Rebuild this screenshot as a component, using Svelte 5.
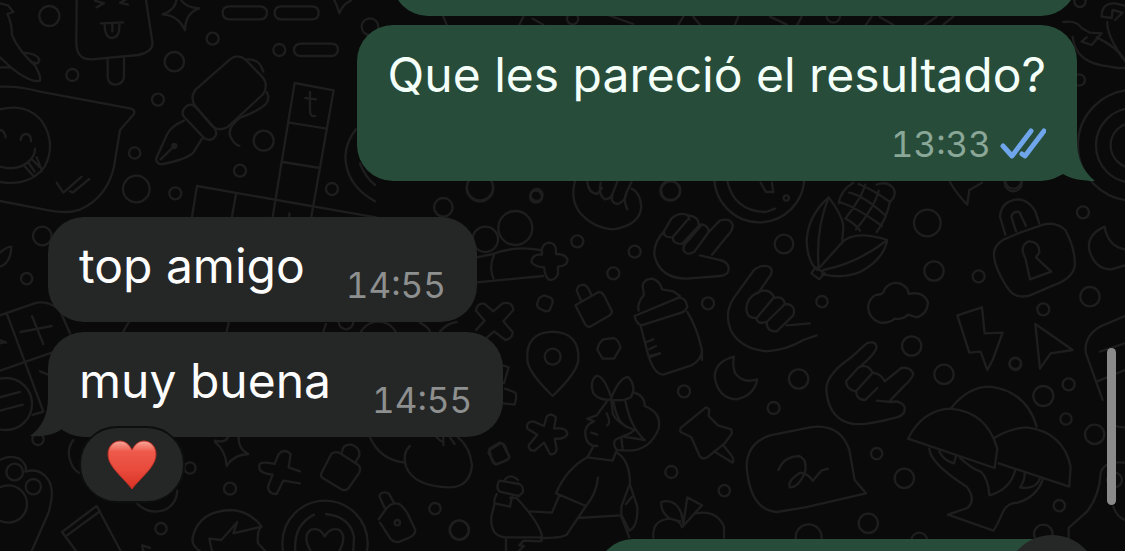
<script>
  // Each tile is a patch of the wallpaper drawn on its own 3x grid.
  const tiles = [
    {
      x: 0,
      y: 0,
      circles: [
        [148, 48, 30], [217, 225, 18], [638, 116, 18], [523, 185, 29],
        [474, 299, 18], [404, 459, 17], [409, 567, 40], [526, 580, 18],
        [720, 512, 18], [791, 422, 30], [838, 150, 18], [996, 567, 18],
        [1110, 80, 25], [523, 438, 6],
      ],
      paths: [
        "M230 0 L229 130 Q230 180 275 178 L415 165 Q462 155 457 125 L438 0",
        "M285 2 L312 10 L290 22 M382 -4 L360 8 L384 14 M302 70 L370 67 M314 72 Q314 114 337 114 Q361 112 358 70 M337 72 V94",
        "M323 180 V230 Q325 254 347 254 Q371 252 372 230 V174",
        "M530 -5 Q528 30 488 43 Q535 46 555 91 Q556 38 598 25 Q556 24 540 -5",
        "M688 19 H780 Q800 20 801 38 Q800 58 780 58 H688 Q668 57 668 38 Q668 20 688 19",
        "M844 19 H936 Q956 20 956 38 Q956 58 936 58 H844 Q824 57 824 38 Q824 20 844 19",
        "M902 131 H994 Q1014 132 1014 149 Q1012 168 994 168 H902 Q882 166 882 149 Q884 132 902 131",
        "M1000 -4 Q1012 15 1018 40 Q1030 10 1053 2",
        "M0 10 L24 16 L40 36 L22 42 Q36 70 36 105 Q54 150 105 196 Q124 230 120 242 Q90 250 30 200 L0 172 M0 202 H30 M68 158 Q110 160 118 178 L114 190 L92 186",
        "M0 260 Q60 258 120 275 L390 325 Q406 328 402 342 L360 390 L342 500 Q322 590 242 628 Q204 642 150 632 L0 603",
        "M0 328 Q80 308 126 364 Q170 430 134 500 Q90 560 0 546",
        "M0 390 Q14 392 17 412 M62 420 Q64 401 80 402 Q94 405 93 424 M0 500 Q50 514 85 486 Q105 468 105 446 M70 494 L102 530 L126 512 L110 472 M84 486 L104 515 M98 480 L118 500",
        "M170 548 L190 578 L245 530 M210 574 L218 578 L268 537",
        "M586 270 L690 178 Q712 160 736 178 L788 232 Q806 254 790 282 L682 382 Q656 396 634 376 L584 316 Q570 292 586 270",
        "M554 324 Q568 306 586 320 L642 382 Q656 402 642 414 Q626 426 610 412 L550 348 Q544 336 554 324",
        "M552 362 Q510 380 500 406 L468 476 Q470 496 490 492 Q560 478 580 458 L606 416 M482 478 L523 438",
        "M742 178 Q780 176 790 215 M800 276 Q812 296 796 314 Q770 336 722 352 Q676 386 694 415 Q704 434 718 438",
        "M884 249 L1001 271 L934 651 M884 249 L818 651 M868 368 L980 386 M848 486 L960 504 M916 294 L948 298 M930 276 V330 Q930 352 946 348",
        "M576 651 L591 558 L1128 652 M708 582 L696 650 M868 640 V648",
        "M1068 388 Q1020 450 1045 518 Q1064 570 1125 604 M1080 490 Q1095 530 1125 555",
      ],
    },
    {
      x: 350,
      y: 0,
      circles: [[390, 562, 39], [560, 585, 18], [961, 572, 30], [668, 56, 17]],
      paths: ["M280 50 L290 74 M520 50 L508 74 M548 56 L580 74 M760 40 L850 72 M1000 50 L985 74 M1030 50 L1050 74 M1165 50 L1155 74"],
    },
    {
      x: 740,
      y: 0,
      circles: [[1018, 240, 17], [1020, 4, 17], [1180, 436, 166], [1180, 436, 112], [1180, 436, 68], [280, 48, 20], [820, 548, 26]],
      paths: [
        "M1085 50 Q1085 8 1125 10 L1160 18 M1085 50 L1115 54 L1118 30 L1148 38 L1125 60 M1102 66 Q1100 110 1160 190",
        "M970 66 Q1010 60 1025 84 L1050 98 L1085 100 L1055 135 L1025 125 L1040 112 M1070 112 Q1130 140 1155 180 M998 110 Q1005 190 1110 200 Q1135 206 1155 204",
        "M90 50 L140 74 M185 50 L172 74 M395 50 L378 74 M418 50 L460 74 M590 50 L555 74 M640 50 L610 74",
      ],
    },
    {
      x: 0,
      y: 200,
      circles: [
        [127, 108, 28], [80, 236, 17], [114, 718, 17], [570, 804, 17],
        [690, 866, 18], [483, 986, 17], [44, 816, 25], [100, 860, 23],
        [18, 612, 78], [25, 912, 56],
      ],
      paths: [
        "M0 158 Q20 140 34 140 Q32 190 0 200",
        "M0 346 L110 308 Q150 302 180 332 L210 400 M20 340 L130 634 M0 512 L155 458 M0 420 L18 428 M62 396 L155 378 M96 348 L130 432 M0 430 L16 426 M120 514 L145 524 M0 592 L60 576 M0 632 L68 614 M98 645 L128 636",
        "M0 780 Q28 764 58 776 Q84 796 76 815 Q120 802 145 840 Q166 870 145 940 L95 1053",
        "M220 720 Q194 752 218 800 Q232 820 244 820 M412 912 Q450 946 495 930 Q530 912 532 872",
        "M186 996 L290 918 L362 1053 M186 996 L228 1053 M196 1010 L300 934",
        "M645 722 Q676 730 684 712 M716 712 Q714 746 745 762 Q700 764 680 798 Q678 754 645 726",
        "M778 800 Q776 786 800 788 L824 792 L836 762 Q854 744 872 762 L866 802 L900 814 M778 800 Q776 820 818 824 L804 860 Q804 882 830 882 L850 842 L900 850",
        "M600 1053 Q570 1035 580 1005 Q600 934 690 930 Q750 932 785 980 L700 1000 L712 966 L664 1020 L628 1016 L636 1053 M785 980 Q770 990 774 1030 L796 1053",
        "M370 395 Q380 376 386 368 M686 368 L680 395 M430 1053 L426 1036 L450 1044",
      ],
    },
    {
      x: 270,
      y: 200,
      circles: [
        [520, 22, 28], [495, 926, 17], [568, 990, 28], [165, 1030, 128],
        [382, 968, 8], [228, 366, 22], [325, 425, 60],
      ],
      paths: [
        "M76 1053 Q70 975 132 944 M168 942 Q240 950 252 1010 L250 1053 M122 1053 Q96 1008 122 990 Q150 980 164 1010 Q180 980 208 990 Q232 1010 208 1053",
        "M154 820 L184 762 Q196 752 210 760 L264 794 Q274 804 268 818 L236 864 Q228 874 214 868 L158 834 Q150 828 154 820 M216 756 Q218 732 244 734 Q272 742 268 768 L256 788",
        "M326 958 L346 930 Q364 904 388 912 Q408 926 420 956 L436 990 Q436 1004 420 1012 L386 1026 Q366 1028 356 1008 L330 968 M344 924 L328 888 Q334 872 356 880 L374 912",
        "M300 712 Q330 780 404 788 M420 738 Q396 760 408 800 Q432 860 540 862 Q600 860 606 796 Q600 740 564 712 M500 712 L514 724 M520 712 V736 M540 712 L554 732",
        "M656 760 Q654 752 668 744 L694 730 Q702 730 706 740 L718 770 Q718 778 706 782 L682 792 Q672 790 668 780 Z",
        "M700 496 L716 502 L702 550 M705 566 L736 578 Q742 588 734 614 L700 610",
        "M168 372 L160 395 M450 368 Q474 380 480 395 M560 366 Q530 370 510 395",
      ],
    },
    {
      x: 450,
      y: 170,
      circles: [
        [90, 54, 40], [258, 80, 18], [106, 208, 38], [196, 174, 51],
        [382, 214, 18], [554, 245, 18], [490, 310, 18], [774, 400, 18],
        [662, 62, 28], [1002, 222, 28], [308, 560, 24], [928, 22, 135],
        [1009, 84, 8],
      ],
      paths: [
        "M80 262 L128 252 Q200 226 270 240 M80 337 L280 318 M132 256 Q116 290 130 325",
        "M276 254 V236 Q282 218 298 218 Q316 220 318 238 V252 Q350 252 353 272 Q350 288 324 290 V312 Q318 330 300 330 Q286 326 282 292 Q250 290 244 274 Q250 250 276 254",
        "M78 422 Q80 400 102 400 L130 424 L158 400 Q188 394 190 420 L160 454 L188 486 Q188 506 166 510 L132 484 L108 505 M78 422 L104 452 L78 480",
        "M268 384 L282 376 L300 382 Q310 388 308 398 L300 418 Q294 428 282 422 L266 414 Q260 408 262 398 Z",
        "M376 406 L446 366 Q456 366 462 376 L486 424 Q486 432 476 438 L420 470 Q412 472 406 464 Z M394 394 L380 362 Q382 344 402 344 Q416 350 424 376",
        "M375 33 Q360 90 390 128 Q430 174 490 178 Q570 166 574 110 Q570 66 545 56 M412 36 Q416 70 442 72 L456 54 M452 38 Q444 74 464 88 Q482 88 488 70 L502 36 M488 72 Q478 98 504 102 Q528 92 530 66 L545 36 M530 66 Q518 90 532 118",
        "M642 184 Q608 220 614 260 Q632 326 710 326 L810 318 Q838 316 836 292 Q830 272 808 270 L750 256 M642 184 L664 146 Q690 124 714 136 L718 148 M642 184 Q640 204 668 202 L712 150 M668 202 Q668 222 696 222 L750 164 M714 136 Q748 140 746 164 Q774 160 776 186 L734 244 Q712 260 700 240 Q700 222 716 210 L752 168 M776 186 L810 152 Q840 142 848 164 Q850 180 830 200 L786 254",
        "M912 300 Q940 280 960 292 Q972 304 956 324 L924 370 M912 300 L850 386 Q822 430 842 480 Q870 536 950 544 Q1010 540 1060 510 L1100 496 M920 368 Q884 390 890 424 Q894 446 920 444 L972 382 Q960 354 930 364 M920 444 Q920 464 950 456 L1005 402 Q1000 376 972 384 M950 456 Q950 486 980 484 L1030 436 Q1040 404 1005 402 M1080 460 L1010 466",
        "M578 350 Q580 326 608 326 Q632 336 636 358 L670 364 L690 378 M578 350 L582 374 Q560 400 566 422 M554 438 L688 382 Q708 384 712 410 Q708 424 694 428 L574 466 Q558 460 554 438 M572 468 L596 560 M712 426 Q740 470 756 540 L756 570 M590 516 L610 508 M598 538 L618 528 M596 558 L630 550",
        "M460 508 L492 504 Q504 508 512 532 L492 566 H458 L442 540 Q446 518 460 508",
        "M232 570 Q226 488 308 485 Q390 488 385 570 Q380 610 308 678 Q236 610 232 570",
        "M832 33 Q852 124 948 126 L975 116 M932 38 L948 66 L970 66 L966 38",
      ],
    },
    {
      x: 780,
      y: 170,
      circles: [
        [442, 159, 40], [462, 303, 29], [596, 319, 18], [126, 395, 17],
        [395, 528, 29], [909, 127, 18], [930, 380, 29], [790, 418, 18],
        [706, 582, 18], [700, 32, 24],
      ],
      paths: [
        "M146 82 Q80 140 80 220 Q84 276 112 300 M146 82 Q106 180 116 296 M146 82 Q190 140 190 172 L186 220 M112 300 L184 220 Q220 178 322 210 Q310 270 240 306 Q184 328 126 312 M130 300 Q232 280 322 210 M106 292 L94 310 L118 328 L134 310 Z",
        "M176 100 Q182 60 220 38 M208 68 Q250 76 318 138 M178 96 Q230 112 306 168 M236 42 Q280 60 330 96 M196 146 Q222 158 240 182 M256 44 Q246 80 196 146 M296 62 Q284 110 228 178 M330 96 Q318 150 290 186 M290 44 Q320 32 340 54 Q352 76 330 96",
        "M510 36 Q530 72 562 104 L568 60 L606 38",
        "M672 208 L720 188 L790 164 Q828 154 856 180 Q888 240 884 290 Q876 326 820 346 L750 376 Q704 390 680 350 Q640 286 642 248 Q644 226 672 208 M676 194 L660 140 Q664 90 720 88 Q750 94 766 124 L778 160 M708 184 L694 140 Q700 122 718 126 L738 168",
        "M736 264 Q716 230 746 214 Q780 216 778 248 L768 262 L814 305 L750 328 Z",
        "M974 170 Q920 194 928 240 Q944 298 994 298 L1035 286 M974 170 Q984 230 1035 238",
        "M290 374 Q310 376 314 358 Q330 334 360 340 Q386 352 386 372 Q430 362 444 396 Q442 434 410 442 L384 434 Q368 450 344 446 Q330 460 300 458 Q266 446 264 410 Q270 380 290 374",
        "M532 436 L606 412 L614 490 L668 488 L638 570 L622 600 L602 545 L568 548 Z",
        "M766 462 L878 540 L812 550 L780 596 Z",
        "M1035 438 L960 470 Q910 500 918 550 L968 690 M960 545 L1035 520 M950 635 L1035 600",
      ],
    },
    {
      x: 450,
      y: 350,
      circles: [
        [702, 124, 18], [1046, 87, 29], [971, 174, 18], [664, 366, 18],
        [823, 422, 17], [28, 540, 29],
      ],
      paths: [
        "M596 18 Q612 72 640 74 L724 46 Q756 30 756 0 M598 22 L630 10",
        "M852 20 Q796 34 794 80 Q804 146 860 148 Q912 138 922 88 Q880 102 856 70 Q846 46 852 20",
        "M232 236 Q226 216 250 214 L282 228 L290 200 Q302 186 318 202 L312 236 Q350 230 352 252 Q346 268 314 266 L320 296 Q318 316 300 312 L282 278 L254 302 Q236 304 236 286 L262 254 Z",
        "M118 296 L148 278 Q158 278 162 290 L178 320 Q176 330 162 334 L138 344 Q128 340 124 326 Z",
        "M482 138 Q460 74 438 78 Q418 94 430 130 Q450 154 482 148 Q510 78 536 82 Q560 110 544 140 Q520 156 482 148",
        "M552 128 Q584 136 584 168 Q636 188 626 236 Q600 300 540 302 L500 300 Q480 270 512 262 L540 250 L554 240 Q500 220 488 190 L484 150 M526 152 Q540 230 584 270 M490 150 Q500 220 534 232 M514 262 L518 296 M584 270 L520 260 M474 150 L440 196 L412 206 L432 214 Q402 226 406 254 Q410 290 442 288 M470 190 Q484 220 472 226 M424 248 L442 254",
        "M430 290 L412 322 Q350 356 318 430 M412 322 L488 332 L498 306 Q540 330 540 400 L514 470 V500 L538 562 M318 430 L408 468 L350 554 Q334 564 270 564 M328 436 L306 488 L240 484 M444 382 Q440 430 408 468 M408 468 L384 504 L512 496",
        "M540 404 L562 470 Q564 530 538 542 L516 498 M546 440 L528 462",
        "M164 390 Q180 368 204 390 M148 392 L208 402 Q222 408 218 428 L206 438 L152 426 Q138 420 144 400 Z M140 432 Q130 450 134 460 L124 500 Q120 560 168 562 H270 L276 572 M186 440 L180 470 L134 460 M180 444 L200 444 Q270 520 276 560 M168 562 V603 M206 603 L222 588 L208 586 L220 572 L272 574",
        "M768 172 L694 232 Q684 246 700 250 L724 262 L750 320 Q760 330 772 322 L824 280 L846 250 L844 238 L804 226 L776 198 L778 178 Z M792 304 L848 338 Q854 330 844 316 L820 286",
        "M610 563 Q606 510 660 506 L690 514 M700 522 L712 442 L756 466 L696 532 Q690 510 660 506 Q632 488 634 456 Q676 444 694 490 L700 522 M736 490 Q800 478 822 530 V563",
        "M1080 232 L960 256 Q890 280 890 350 Q900 480 980 486 L1066 472 M986 360 Q1000 320 1048 318 Q1074 330 1064 370 Q1044 414 1020 412 Q1010 394 1050 368 Q1074 370 1088 392",
      ],
    },
    {
      x: 780,
      y: 350,
      circles: [
        [492, 73, 29], [706, 40, 17], [790, 138, 30],
        [866, 103, 18], [858, 207, 17], [944, 253, 29], [290, 311, 17],
        [373, 385, 29], [838, 467, 17], [265, 520, 29], [86, 562, 39],
        [418, 572, 24], [790, 552, 28], [1004, 390, 22],
      ],
      paths: [
        "M210 25 L260 -20 Q286 -30 290 -8 Q286 12 240 50 M210 25 Q130 80 140 130 Q150 210 220 222 Q260 226 350 202 Q378 196 374 170 Q360 150 334 156 L290 152 M198 94 L236 52 Q264 40 278 68 L228 124 Q200 120 198 94 M228 124 Q230 150 256 150 L292 114 M278 68 Q304 72 314 94 L364 54 Q392 50 400 72 Q394 90 374 106 L330 152",
        "M90 232 Q180 218 208 300 L224 390 L258 430 L76 472 M98 392 L124 362 L144 356",
        "M384 266 Q428 180 510 176 Q620 184 652 296 L644 354 Z M514 174 Q564 110 630 110 Q740 124 770 230 M646 262 Q694 234 740 232 Q850 246 872 350 L868 410 L656 340",
        "M448 296 Q450 340 560 410 Q590 450 562 474 L504 494 L640 542 Q650 530 668 488 Q680 458 714 458 Q770 440 788 390 M478 304 Q490 332 522 340 L528 318 M540 324 Q580 360 604 366 Q626 390 628 436 Q690 420 706 360 M734 366 Q736 390 720 412 Q768 420 780 386",
        "M1035 338 Q970 332 962 370 Q958 440 920 486 L866 534 V570 M1000 470 Q1010 500 1035 510 M984 205 Q1000 234 1035 232",
      ],
    },
  ];

  const received = [
    { text: "top amigo", time: "14:55" },
    { text: "muy buena", time: "14:55", reaction: "❤️" },
  ];
</script>

<main class="chat">
  <svg class="wallpaper" viewBox="0 0 1125 551" preserveAspectRatio="xMidYMid slice" aria-hidden="true">
    {#each tiles as tile}
      <g transform="translate({tile.x} {tile.y}) scale(0.3333)">
        {#each tile.circles as [cx, cy, r]}
          <circle {cx} {cy} {r} />
        {/each}
        {#each tile.paths as d}
          <path {d} />
        {/each}
      </g>
    {/each}
  </svg>

  <div class="bubble sent previous"></div>

  <div class="bubble sent">
    <p>Que les pareció el resultado?</p>
    <div class="meta">
      <time>13:33</time>
      <svg class="ticks" viewBox="0 0 46 32" aria-label="Leído">
        <path d="M3 18 L12 28 L31 3 M22 26 L25 28 L44 3" />
      </svg>
    </div>
    <svg class="tail" viewBox="0 0 34 40" aria-hidden="true">
      <path d="M0 0 H16 C16 18 22 30 34 40 C22 40 10 38 2 33 L0 34 Z" />
    </svg>
  </div>

  <div class="group">
    {#each received as message}
      <div class="bubble received">
        <p>{message.text}</p>
        <time>{message.time}</time>
        {#if message.reaction}
          <svg class="tail" viewBox="0 0 34 40" aria-hidden="true">
            <path d="M34 0 H18 C18 18 12 30 0 39 C12 40 24 38 32 32 L34 34 Z" />
          </svg>
          <button class="reaction" aria-label={message.reaction}>
            <svg viewBox="0 0 50 50" aria-hidden="true">
              <defs>
                <linearGradient id="heart" x1="0" y1="0" x2="0" y2="1">
                  <stop offset="0" stop-color="#f9a79b" />
                  <stop offset="0.22" stop-color="#ee5a4a" />
                  <stop offset="0.6" stop-color="#e84a3b" />
                  <stop offset="1" stop-color="#d93325" />
                </linearGradient>
              </defs>
              <path
                fill="url(#heart)"
                stroke="#b92f25"
                d="M25 10 C22 4 18 1 13 1 C6 1 1 7 1 14 C1 27 15 36 25 49 C35 36 49 27 49 14 C49 7 44 1 37 1 C32 1 28 4 25 10 Z"
              />
            </svg>
          </button>
        {/if}
      </div>
    {/each}
  </div>

  <div class="bubble sent next"></div>

  <button class="scroll-down" aria-label="Ir al final"></button>
  <div class="scrollbar"></div>
</main>

<style>
  :global(body) {
    background: #0a0a0a;
  }

  .chat {
    position: relative;
    display: flex;
    flex-direction: column;
    box-sizing: border-box;
    height: 100vh;
    padding: 0 48px;
    overflow: hidden;
    font-family: Inter, "Liberation Sans", sans-serif;
  }

  .wallpaper {
    position: absolute;
    inset: 0;
    width: 100%;
    height: 100%;
    fill: none;
    stroke: #1e1e1e;
    stroke-width: 7;
    stroke-linecap: round;
    stroke-linejoin: round;
  }

  .bubble {
    position: relative;
    display: flex;
    flex: none;
    box-sizing: border-box;
    border-radius: 36px;
  }

  .sent {
    flex-direction: column;
    align-items: flex-end;
    align-self: flex-end;
    gap: 17px;
    padding: 20px 31px 15px;
    background: #274c3a;
    color: #f3fff8;
  }

  .received {
    align-items: flex-start;
    gap: 41px;
    padding: 19px 31px 15px;
    background: #252726;
    color: #fdfdfd;
  }

  .previous,
  .next {
    height: 104px;
  }

  .previous {
    width: 685px;
    margin: -88px 0 9px;
  }

  .next {
    width: 480px;
  }

  .group {
    display: flex;
    flex: none;
    flex-direction: column;
    align-items: flex-start;
    gap: 10px;
    margin: 36px 0 102px;
  }

  p {
    margin: 0;
    font-size: 48px;
    line-height: 60px;
    white-space: nowrap;
  }

  time {
    font-size: 35px;
    font-variant-numeric: tabular-nums;
    line-height: 44px;
  }

  .received time {
    margin-top: 27px;
    color: #8e8f8f;
  }

  .meta {
    display: flex;
    align-items: center;
    gap: 9px;
    color: #8aa797;
  }

  .ticks {
    width: 46px;
    height: 32px;
    fill: none;
    stroke: #6fa5ea;
    stroke-width: 5;
    stroke-linecap: round;
    stroke-linejoin: round;
  }

  .tail {
    position: absolute;
    bottom: 0;
    width: 34px;
    height: 40px;
  }

  .sent .tail {
    right: -18px;
    fill: #274c3a;
  }

  .received .tail {
    left: -18px;
    fill: #252726;
  }

  .reaction {
    position: absolute;
    top: 94px;
    left: 31px;
    display: flex;
    align-items: center;
    justify-content: center;
    width: 106px;
    height: 77px;
    padding: 0;
    border: 2px solid #0d0e0e;
    border-radius: 38px;
    background: #252726;
  }

  .reaction svg {
    width: 50px;
    height: 50px;
  }

  .scroll-down {
    position: absolute;
    right: 27px;
    bottom: -76px;
    width: 92px;
    height: 92px;
    border: 0;
    border-radius: 50%;
    background: #262828;
  }

  .scrollbar {
    position: absolute;
    top: 348px;
    right: 9px;
    width: 9px;
    height: 157px;
    border-radius: 5px;
    background: #8a8a8a;
  }
</style>
